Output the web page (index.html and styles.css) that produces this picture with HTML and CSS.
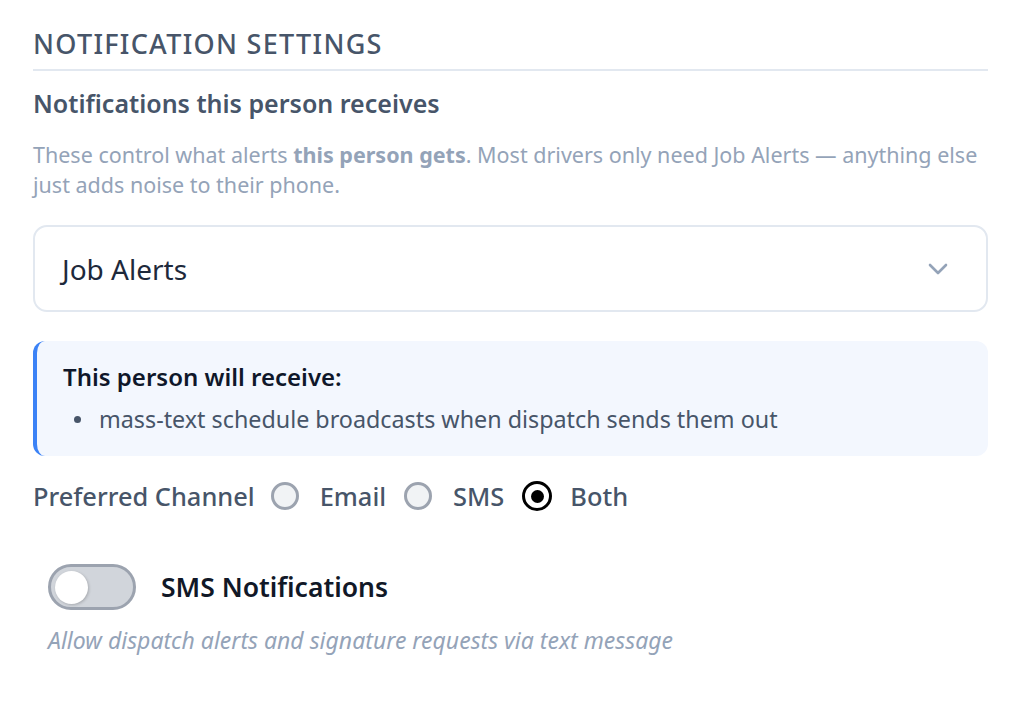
FILE: index.html
```html
<!DOCTYPE html>
<html lang="en">
<head>
    <meta charset="UTF-8">
    <meta name="viewport" content="width=device-width, initial-scale=1.0">
    <title>Notification Settings</title>
    <link rel="stylesheet" href="styles.css">
</head>
<body>
    <div class="settings-section">
        <h2 class="section-title">Notification Settings</h2>

        <h3 class="field-title">Notifications this person receives</h3>
        <p class="help-text">These control what alerts <strong>this person gets</strong>. Most drivers only need Job Alerts — anything else just adds noise to their phone.</p>

        <div class="select-box">
            <span class="select-value">Job Alerts</span>
            <svg class="chevron" width="20" height="12" viewBox="0 0 20 12">
                <polyline points="2,2 10,10 18,2" fill="none" stroke="#94a3b8" stroke-width="2.6" stroke-linecap="round" stroke-linejoin="round"/>
            </svg>
        </div>

        <div class="info-box">
            <div class="info-title">This person will receive:</div>
            <ul class="info-list">
                <li>mass-text schedule broadcasts when dispatch sends them out</li>
            </ul>
        </div>

        <div class="channel-row">
            <span class="channel-label">Preferred Channel</span>
            <label class="radio-option"><span class="radio"></span>Email</label>
            <label class="radio-option"><span class="radio"></span>SMS</label>
            <label class="radio-option"><span class="radio checked"></span>Both</label>
        </div>

        <div class="toggle-row">
            <span class="toggle"><span class="knob"></span></span>
            <span class="toggle-label">SMS Notifications</span>
        </div>
        <p class="toggle-help">Allow dispatch alerts and signature requests via text message</p>
    </div>
</body>
</html>
```

FILE: styles.css
```css
body {
    font-family: "Noto Sans", "Open Sans", sans-serif;
    background-color: #fff;
    margin: 0;
    padding: 0 32px 0 33px;
}
.settings-section {
    padding-top: 26px;
}
.section-title {
    margin: 0;
    font-size: 27px;
    font-weight: 500;
    letter-spacing: 1.3px;
    text-transform: uppercase;
    color: #475569;
    line-height: 36px;
    padding-bottom: 7px;
    border-bottom: 2px solid #e2e8f0;
}
.field-title {
    margin: 15px 0 0;
    font-size: 25px;
    font-weight: 600;
    color: #475569;
    line-height: 34px;
}
.help-text {
    margin: 20px 0 0;
    font-size: 21.5px;
    line-height: 30px;
    color: #94a3b8;
}
.help-text strong {
    font-weight: 700;
}
.select-box {
    margin-top: 25px;
    height: 87px;
    box-sizing: border-box;
    border: 2px solid #e2e8f0;
    border-radius: 14px;
    display: flex;
    align-items: center;
    justify-content: space-between;
    padding: 0 38px 0 27px;
}
.select-value {
    font-size: 28px;
    color: #1e293b;
}
.info-box {
    margin-top: 29px;
    background-color: #f3f7fe;
    border-left: 4px solid #3b82f6;
    border-radius: 12px;
    padding: 20px 26px 21px 26px;
}
.info-title {
    font-size: 24px;
    font-weight: 600;
    color: #0f172a;
    line-height: 32px;
}
.info-list {
    margin: 10px 0 0;
    padding-left: 11px;
    list-style: none;
    font-size: 23.3px;
    line-height: 32px;
    color: #475569;
}
.info-list li {
    display: flex;
    align-items: center;
}
.info-list li::before {
    content: "";
    width: 7px;
    height: 7px;
    border-radius: 50%;
    background-color: #475569;
    margin-right: 18px;
}
.channel-row {
    margin-top: 22px;
    display: flex;
    align-items: center;
    height: 36px;
    font-size: 25.4px;
    font-weight: 500;
    color: #475569;
}
.channel-label {
    margin-right: 16px;
}
.radio-option {
    display: flex;
    align-items: center;
    margin-right: 18px;
}
.radio {
    width: 28px;
    height: 28px;
    box-sizing: border-box;
    border: 3px solid #9ca3af;
    border-radius: 50%;
    background-color: #f1f3f5;
    margin-right: 21px;
}
.radio.checked {
    width: 30px;
    height: 30px;
    border: 3.5px solid #000;
    background-color: #fff;
    display: flex;
    align-items: center;
    justify-content: center;
    margin-right: 18px;
}
.radio.checked::after {
    content: "";
    width: 13px;
    height: 13px;
    border-radius: 50%;
    background-color: #000;
}
.toggle-row {
    margin-top: 50px;
    padding-left: 15px;
    display: flex;
    align-items: center;
}
.toggle {
    width: 88px;
    height: 46px;
    box-sizing: border-box;
    border: 3px solid #9ca3af;
    border-radius: 23px;
    background-color: #d1d5db;
    display: flex;
    align-items: center;
    padding-left: 4px;
    margin-right: 25px;
}
.knob {
    width: 33px;
    height: 33px;
    border-radius: 50%;
    background-color: #fff;
    box-shadow: 1px 1px 3px rgba(0,0,0,0.2);
}
.toggle-label {
    font-size: 26.5px;
    font-weight: 600;
    color: #111827;
}
.toggle-help {
    margin: 15px 0 0;
    padding-left: 15px;
    font-size: 23px;
    font-style: italic;
    color: #94a3b8;
    line-height: 30px;
}
```
